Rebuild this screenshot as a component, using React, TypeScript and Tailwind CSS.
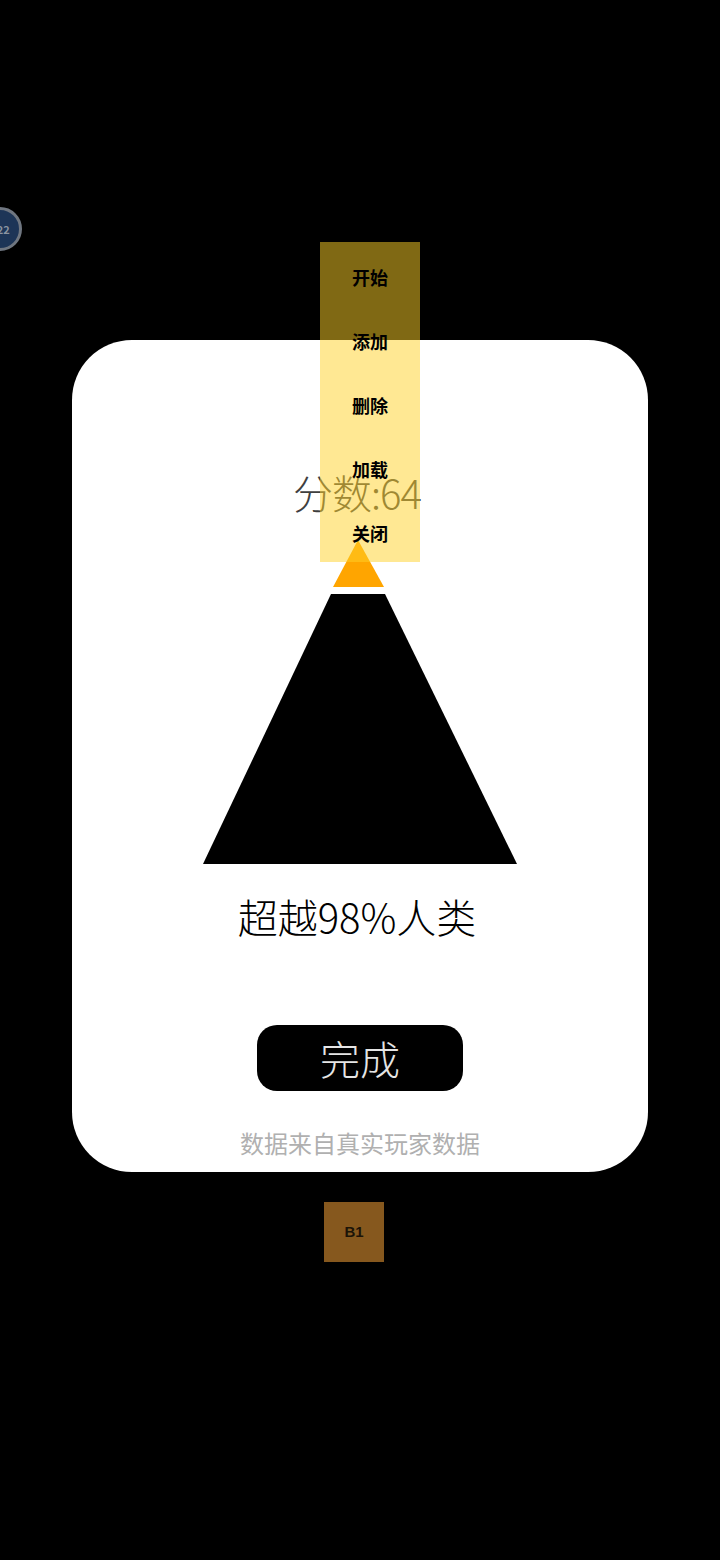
import React from 'react';

const menuItems = ['开始', '添加', '删除', '加载', '关闭'];

const font = { fontFamily: '"Noto Sans CJK SC", "Noto Sans", sans-serif' };

const Pyramid: React.FC = () => (
  <svg width="314" height="324" viewBox="0 0 314 324" className="block">
    <polygon points="155,0 130,47 181,47" fill="#FFA500" />
    <polygon points="128,54 182,54 314,324 0,324" fill="#000000" />
  </svg>
);

const App: React.FC = () => {
  return (
    <div className="relative min-h-[1560px] w-[720px] bg-black overflow-hidden" style={font}>
      {/* level badge, half off screen */}
      <div className="absolute left-[-22px] top-[207px] w-[44px] h-[44px] rounded-full bg-[#1d3557] border-[3px] border-[#6f7680] flex items-center justify-center">
        <span className="text-[11px] font-bold text-[#8a93a0] leading-none">122</span>
      </div>

      <div className="pt-[340px] flex flex-col items-center">
        <div className="w-[576px] h-[832px] bg-white rounded-[60px] flex flex-col items-center">
          <div className="mt-[132px] text-[40px] leading-[40px] font-light text-[#3f3f3f] tracking-tight ml-[-6px]">
            分数:64
          </div>
          <div className="mt-[28px]">
            <Pyramid />
          </div>
          <div className="mt-[31px] text-[40px] leading-[42px] font-light text-black ml-[-6px]">超越98%人类</div>
          <button className="mt-[88px] w-[206px] h-[66px] rounded-[20px] bg-black text-[#e5e5e5] text-[40px] leading-none font-light">
            完成
          </button>
          <div className="mt-[38px] text-[24px] leading-[28px] text-[#b0b0b0]">数据来自真实玩家数据</div>
        </div>

        <div className="mt-[30px] ml-[-12px] w-[60px] h-[60px] bg-[#86581e] flex items-center justify-center">
          <span className="text-[15px] font-bold text-[#1c1408]" style={{ fontFamily: '"Liberation Sans", sans-serif' }}>B1</span>
        </div>
      </div>

      {/* floating menu */}
      <div className="absolute left-[320px] top-[242px] w-[100px] h-[320px] bg-[rgba(255,210,40,0.5)] flex flex-col">
        {menuItems.map(item => (
          <div key={item} className="h-[64px] flex items-center justify-center pt-[6px] text-[18px] font-bold text-black">
            {item}
          </div>
        ))}
      </div>
    </div>
  );
};

export default App;
